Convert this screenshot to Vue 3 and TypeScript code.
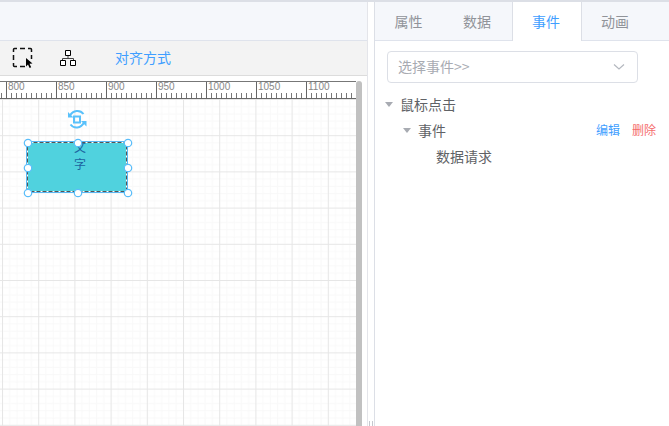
<script setup lang="ts">
import { ref } from 'vue'

interface TreeRow {
  label: string
  level: number
  leaf?: boolean
  actions?: boolean
}

const tabs: string[] = ['属性', '数据', '事件', '动画']
const activeTab = ref<string>('事件')
const selectedEvent = ref<string>('')

const rulerMarks: number[] = [800, 850, 900, 950, 1000, 1050, 1100]

const rows: TreeRow[] = [
  { label: '鼠标点击', level: 0 },
  { label: '事件', level: 1, actions: true },
  { label: '数据请求', level: 2, leaf: true },
]

const handles: [number, number][] = [
  [7, 7], [57, 7], [107, 7],
  [7, 32], [107, 32],
  [7, 57], [57, 57], [107, 57],
]
</script>

<template>
  <div class="editor">
    <section class="workspace">
      <div class="top-strip"></div>
      <div class="toolbar">
        <button class="tool" type="button" aria-label="框选">
          <svg width="22" height="22" viewBox="0 0 22 22">
            <path
              d="M1.500 5V2.500q0-1 1-1H5M8 1.500h5M16 1.500h2.500q1 0 1 1V5M19.500 8v4M1.500 8v5M1.500 16v2.500q0 1 1 1H5M8 19.500h5"
              fill="none" stroke="#111" stroke-width="1.500"
            />
            <path d="M14 11l6.500 5.500-3 .3 1.700 3.400-1.600.8-1.600-3.400-2 2z" fill="#000" />
          </svg>
        </button>
        <button class="tool" type="button" aria-label="组合">
          <svg width="18" height="18" viewBox="0 0 18 18">
            <path d="M9 6.500v3M3.500 12V9.500h11V12" fill="none" stroke="#444" />
            <path d="M6.500 1.500h5v5h-5zM1.500 11.500h5v5h-5zM11.500 11.500h5v5h-5z" fill="#fff" stroke="#000" />
          </svg>
        </button>
        <button class="align" type="button">对齐方式</button>
      </div>
      <div class="stage">
        <div class="board">
          <div class="ruler">
            <span v-for="mark in rulerMarks" :key="mark" class="mark">{{ mark }}</span>
          </div>
          <div class="canvas">
            <svg class="grid" width="100%" height="100%" aria-hidden="true">
              <defs>
                <pattern id="minor" width="7.24" height="7.24" patternUnits="userSpaceOnUse">
                  <path d="M.5 0V7.240M0 .5H7.240" fill="none" stroke="#f8f8f8" />
                </pattern>
                <pattern id="major" x="2" y="0" width="36.200" height="36.200" patternUnits="userSpaceOnUse">
                  <rect width="36.200" height="36.200" fill="url(#minor)" />
                  <path d="M.5 0V36.200M0 .5H36.200" fill="none" stroke="#e6e6e6" />
                </pattern>
              </defs>
              <rect width="100%" height="100%" fill="url(#major)" />
            </svg>
            <svg class="rotate" width="20" height="20" viewBox="0 0 20 20" fill="none" stroke="#59c1fb">
              <rect x="7" y="7.500" width="6" height="6" stroke-width="2" />
              <path d="M3 6.500C6 1 13 .5 16.500 5M17 13.500C14 19.500 7 20 3.500 15.500" stroke-width="2" />
              <path d="M1 3v5.500h5.500zM19.500 17.500v-5.500h-5.500z" fill="#59c1fb" stroke="none" />
            </svg>
            <div class="node">
              <span>文</span>
              <span>字</span>
              <svg class="selection" width="114" height="64" viewBox="0 0 114 64">
                <rect x="5.500" y="5.500" width="101" height="51" fill="none" stroke="#59b8f5" />
                <rect x="6.500" y="6.500" width="99" height="49" fill="none" stroke="#fff" />
                <rect x="6.500" y="6.500" width="99" height="49" fill="none" stroke="#555" stroke-dasharray="4 2" />
                <circle
                  v-for="([x, y], i) in handles" :key="i"
                  :cx="x" :cy="y" r="3.700" fill="#fff" stroke="#59bdfa" stroke-width="1.200"
                />
              </svg>
            </div>
          </div>
        </div>
        <div class="scroll-thumb"></div>
      </div>
    </section>

    <div class="splitter"><i></i><i></i></div>

    <aside class="panel">
      <nav class="tabs" role="tablist">
        <button
          v-for="tab in tabs" :key="tab" type="button" role="tab"
          class="tab" :class="{ active: tab === activeTab }"
          :aria-selected="tab === activeTab" @click="activeTab = tab"
        >{{ tab }}</button>
      </nav>
      <div class="content">
        <div class="picker">
          <select v-model="selectedEvent" aria-label="选择事件">
            <option value="">选择事件&gt;&gt;</option>
            <option value="click">鼠标点击</option>
          </select>
          <svg class="chevron" width="12" height="8" viewBox="0 0 12 8">
            <path d="M1 1.500l5 4.500 5-4.500" fill="none" stroke="#b4b8bf" stroke-width="1.200" />
          </svg>
        </div>
        <ul class="tree">
          <li v-for="row in rows" :key="row.label" class="row" :class="'level-' + row.level">
            <svg class="caret" width="8" height="5" viewBox="0 0 8 5">
              <path v-if="!row.leaf" d="M0 0h8L4 5z" fill="#a8abb2" />
            </svg>
            <span class="label">{{ row.label }}</span>
            <template v-if="row.actions">
              <button class="link edit" type="button">编辑</button>
              <button class="link remove" type="button">删除</button>
            </template>
          </li>
        </ul>
      </div>
    </aside>
  </div>
</template>

<style>
body {
  background: #fff;
}
</style>

<style scoped>
.editor {
  display: flex;
  height: 100vh;
  box-sizing: border-box;
  border-top: 2px solid #dcdfe6;
  overflow: hidden;
  font-family: "Noto Sans CJK SC", sans-serif;
  font-size: 14px;
  color: #606266;
}
button {
  margin: 0;
  padding: 0;
  border: 0;
  background: none;
  font: inherit;
  cursor: pointer;
}
svg {
  display: block;
}
.workspace {
  flex: 1;
  min-width: 0;
  display: flex;
  flex-direction: column;
  border-right: 1px solid #e4e5ea;
}
.top-strip {
  height: 38px;
  background: #f5f7fb;
  border-bottom: 1px solid #dfe3ec;
}
.toolbar {
  display: flex;
  align-items: center;
  gap: 25px;
  height: 34px;
  padding-left: 12px;
  background: #f3f3f3;
  border-bottom: 1px solid #dcdcdc;
}
.align {
  margin-left: 13px;
  padding-bottom: 2px;
  line-height: 20px;
  color: #409eff;
}
.stage {
  flex: 1;
  min-height: 0;
  display: flex;
  padding: 5px 5px 0 0;
}
.board {
  flex: 1;
  min-width: 0;
  display: flex;
  flex-direction: column;
}
.scroll-thumb {
  width: 6px;
  border-radius: 3px 3px 0 0;
  background: #c1c1c1;
}
.ruler {
  display: flex;
  height: 16px;
  padding-left: 6px;
  overflow: hidden;
  border-top: 1px solid #777;
  border-bottom: 1px solid #666;
  background: repeating-linear-gradient(to right, transparent 0 1px, #777 1px 2px, transparent 2px 5px) 0 100% / 100% 5px no-repeat;
}
.mark {
  flex: none;
  box-sizing: border-box;
  width: 50px;
  padding-left: 1px;
  border-left: 1px solid #666;
  font-family: "Liberation Sans", sans-serif;
  font-size: 10px;
  line-height: 10px;
  color: #888;
}
.canvas {
  position: relative;
  flex: 1;
  min-height: 0;
  overflow: hidden;
}
.grid {
  position: absolute;
  inset: 0;
}
.rotate {
  position: absolute;
  left: 67px;
  top: 10px;
}
.node {
  position: absolute;
  left: 27px;
  top: 43px;
  display: flex;
  flex-direction: column;
  align-items: center;
  justify-content: center;
  box-sizing: border-box;
  width: 100px;
  height: 50px;
  padding: 0 0 24px 6px;
  background: #50d2de;
  color: #1c63a0;
  font-size: 12px;
  line-height: 17px;
}
.selection {
  position: absolute;
  left: -6px;
  top: -6px;
}
.splitter {
  display: flex;
  align-items: flex-end;
  justify-content: space-evenly;
  width: 6px;
}
.splitter i {
  width: 1px;
  height: 5px;
  background: #c5c8ce;
}
.panel {
  width: 294px;
  border-left: 1px solid #dcdfe6;
}
.tabs {
  display: flex;
  height: 38px;
  background: #f5f7fb;
  border-bottom: 1px solid #dfe3ec;
}
.tab {
  box-sizing: border-box;
  width: 70px;
  height: 39px;
  margin-right: -1px;
  padding: 0 2px 2px 0;
  border: solid transparent;
  border-width: 0 1px;
  color: #909399;
}
.tab:first-child {
  width: 69px;
}
.tab.active {
  border-color: #dcdfe6;
  background: #fff;
  color: #409eff;
}
.content {
  padding: 10px 12px;
}
.picker {
  display: grid;
  width: 251px;
}
.picker select {
  grid-area: 1 / 1;
  appearance: none;
  height: 32px;
  padding: 0 30px 2px 10px;
  border: 1px solid #dcdfe6;
  border-radius: 4px;
  background: #fff;
  font: inherit;
  color: #a8abb2;
}
.chevron {
  grid-area: 1 / 1;
  place-self: center end;
  margin-right: 13px;
  pointer-events: none;
}
.tree {
  margin: 8px 0 0;
  padding: 0;
  list-style: none;
}
.row {
  display: flex;
  align-items: center;
  height: 26px;
  padding-right: 1px;
}
.caret {
  margin: 0 7px 0 -2px;
}
.level-1 {
  padding-left: 18px;
}
.level-2 {
  padding-left: 36px;
}
.label {
  flex: 1;
}
.link {
  margin-left: 12px;
  padding-bottom: 2px;
  font-size: 12px;
}
.edit {
  color: #409eff;
}
.remove {
  color: #f56c6c;
}
</style>
